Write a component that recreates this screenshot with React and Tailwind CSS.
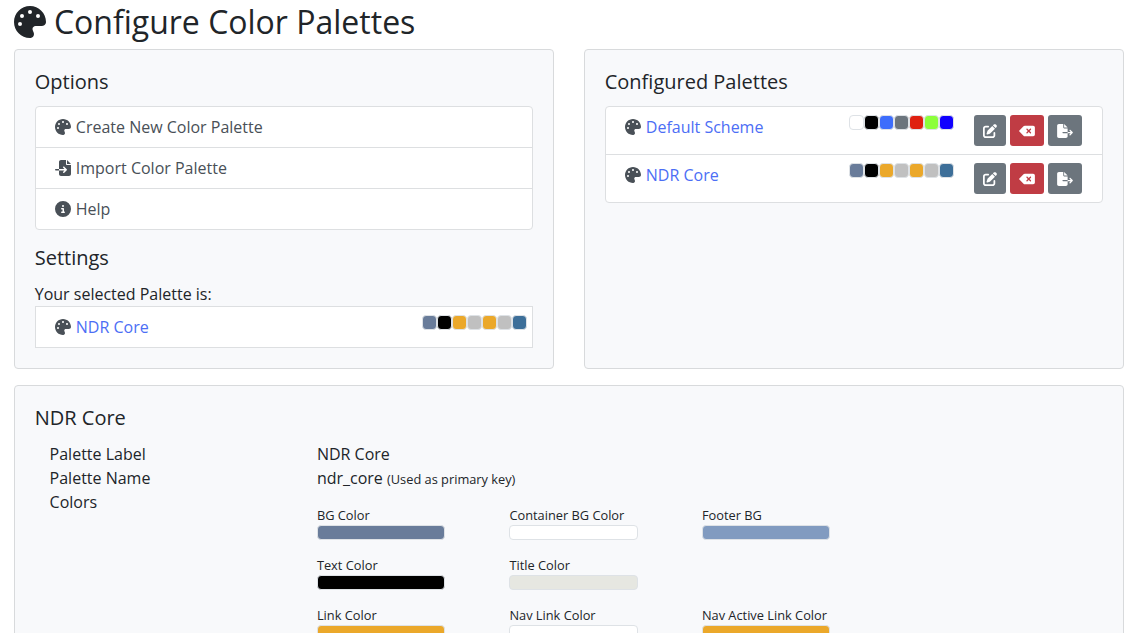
import {
  FaPalette,
  FaFileImport,
  FaCircleInfo,
  FaPenToSquare,
  FaDeleteLeft,
  FaFileExport,
} from "react-icons/fa6";

const NDR = ["#697c9a", "#000000", "#eba82a", "#c0c0c0", "#eba82a", "#c0c0c0", "#3d6f99"];
const DEFAULT = ["#ffffff", "#000000", "#3d6dfc", "#6c757d", "#df2010", "#8cff3a", "#1000ff"];

const COLORS = [
  { label: "BG Color", color: "#697c9a" },
  { label: "Container BG Color", color: "#ffffff" },
  { label: "Footer BG", color: "#819bc0" },
  { label: "Text Color", color: "#000000" },
  { label: "Title Color", color: "#e6e7e1" },
  null,
  { label: "Link Color", color: "#eba82a" },
  { label: "Nav Link Color", color: "#ffffff" },
  { label: "Nav Active Link Color", color: "#eba82a" },
];

function Card({ className = "", children }) {
  return (
    <section className={`rounded-[4px] border border-[#d8dadc] bg-[#f8f9fb] p-5 ${className}`}>
      {children}
    </section>
  );
}

function Title({ children }) {
  return <h5 className="mb-3 -ml-[0.3px] text-[20px] leading-6">{children}</h5>;
}

function Swatches({ colors }) {
  return (
    <div className="flex">
      {colors.map((c, i) => (
        <span
          key={i}
          className="size-[15px] rounded-[4px] border border-[#dee2e6]"
          style={{ backgroundColor: c }}
        />
      ))}
    </div>
  );
}

function Option({ icon: Icon, children }) {
  return (
    <li className="flex h-[41px] items-center gap-[4.5px] pr-5 pb-px pl-[19.3px] text-[#495057] last:h-10 last:pb-0">
      <Icon className="size-4" />
      <span>{children}</span>
    </li>
  );
}

function PaletteLink({ children }) {
  return (
    <div className="flex h-6 flex-1 items-center gap-[4.5px] text-[#495057]">
      <FaPalette className="size-4" />
      <a className="text-[#4c6ef5]">{children}</a>
    </div>
  );
}

function PaletteRow({ name, colors }) {
  return (
    <li className="flex items-start py-2 pr-5 pl-[19.3px]">
      <PaletteLink>{name}</PaletteLink>
      <Swatches colors={colors} />
      <div className="ml-5 flex gap-1 text-[14px] text-white">
        <button className="flex h-[31px] w-8 items-center justify-center rounded-[3px] bg-[#6c757d]">
          <FaPenToSquare />
        </button>
        <button className="flex h-[31px] w-[34px] items-center justify-center rounded-[3px] bg-[#c03c44]">
          <FaDeleteLeft className="h-[14px] w-4" />
        </button>
        <button className="flex h-[31px] w-[34px] items-center justify-center rounded-[3px] bg-[#6c757d]">
          <FaFileExport className="h-[14px] w-4" />
        </button>
      </div>
    </li>
  );
}

export default function App() {
  return (
    <main className="h-[633px] overflow-hidden bg-white px-[14px] pt-[3px] font-['Open_Sans',sans-serif] text-[16px] leading-6 text-[#212529]">
      <h2 className="mb-2 -ml-[0.5px] flex h-[38px] items-center gap-[8.4px] text-[32px] leading-[38px]">
        <FaPalette className="size-8" />
        <span>Configure Color Palettes</span>
      </h2>

      <div className="flex w-[1110px] gap-[30px]">
        <Card className="h-[320px] flex-1">
          <Title>Options</Title>
          <ul className="mb-4 divide-y divide-[#dddfe1] rounded-[4px] border border-[#dddfe1] bg-white">
            <Option icon={FaPalette}>Create New Color Palette</Option>
            <Option icon={FaFileImport}>Import Color Palette</Option>
            <Option icon={FaCircleInfo}>Help</Option>
          </ul>
          <Title>Settings</Title>
          <p className="-ml-[0.3px]">Your selected Palette is:</p>
          <div className="flex h-[42px] items-start border border-[#dddfe1] bg-white py-2 pr-[5px] pl-[19.3px]">
            <PaletteLink>NDR Core</PaletteLink>
            <Swatches colors={NDR} />
          </div>
        </Card>
        <Card className="h-[320px] flex-1">
          <Title>Configured Palettes</Title>
          <ul className="divide-y divide-[#dddfe1] rounded-[4px] border border-[#dddfe1] bg-white">
            <PaletteRow name="Default Scheme" colors={DEFAULT} />
            <PaletteRow name="NDR Core" colors={NDR} />
          </ul>
        </Card>
      </div>

      <Card className="mt-4 w-[1110px]">
        <Title>NDR Core</Title>
        <dl className="grid grid-cols-[267.3px_1fr] pl-[14.6px]">
          <dt>Palette Label</dt>
          <dd>NDR Core</dd>
          <dt>Palette Name</dt>
          <dd className="h-6">
            ndr_core <small className="text-[12.8px]">(Used as primary key)</small>
          </dd>
          <dt>Colors</dt>
          <dd className="grid grid-cols-[192.5px_192.5px_192.5px] pt-[12.8px]">
            {COLORS.map((c, i) => (
              <div key={i} className="h-[50.25px]">
                {c && (
                  <>
                    <div className="h-[22.2px] text-[12.8px] leading-6">{c.label}</div>
                    <div
                      className="h-[15px] w-[128.3px] rounded-[4px] border border-[#dee2e6]"
                      style={{ backgroundColor: c.color }}
                    />
                  </>
                )}
              </div>
            ))}
          </dd>
        </dl>
      </Card>
    </main>
  );
}
